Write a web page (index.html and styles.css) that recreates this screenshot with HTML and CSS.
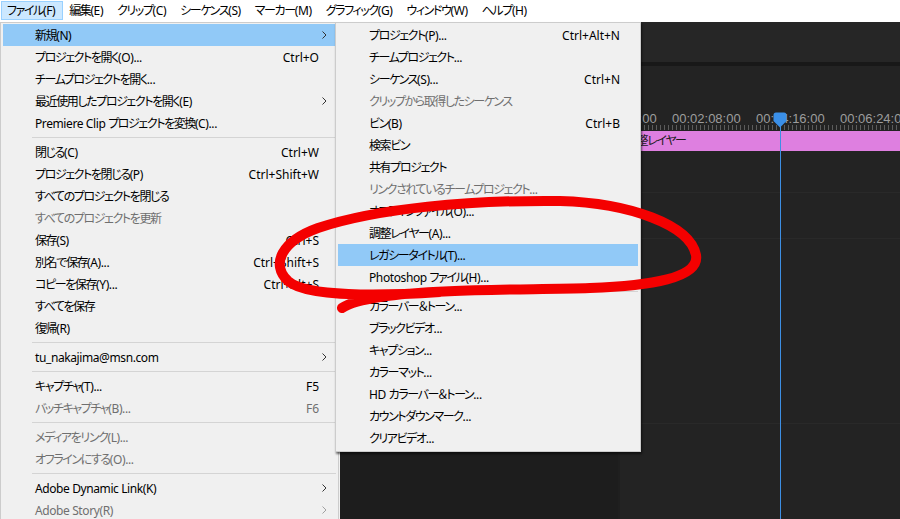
FILE: index.html
```html
<!DOCTYPE html>
<html lang="ja">
<head>
<meta charset="utf-8">
<title>Premiere Pro - ファイル メニュー</title>
<link rel="stylesheet" href="styles.css">
</head>
<body>
<div class="app">
  <div class="menubar">
    <span class="mb-item active"><span class="j">ファイル</span>(F)</span>
    <span class="mb-item"><span class="j">編集</span>(E)</span>
    <span class="mb-item"><span class="j">クリップ</span>(C)</span>
    <span class="mb-item"><span class="j">シーケンス</span>(S)</span>
    <span class="mb-item"><span class="j">マーカー</span>(M)</span>
    <span class="mb-item"><span class="j">グラフィック</span>(G)</span>
    <span class="mb-item"><span class="j">ウィンドウ</span>(W)</span>
    <span class="mb-item"><span class="j">ヘルプ</span>(H)</span>
  </div>
  <div class="workspace">
    <div class="left-col"></div>
    <div class="timeline">
      <div class="tl-header"></div>
      <div class="tl-divider"></div>
      <div class="tl-body">
        <div class="tl-side"></div>
        <div class="tl-tracks">
          <div class="tl-gap"></div>
          <div class="ruler-labels">
            <span class="tc first">00:00:00:00</span>
            <span class="tc">00:02:08:00</span>
            <span class="tc">00:04:16:00</span>
            <span class="tc">00:06:24:00</span>
          </div>
          <div class="ticks"></div>
          <div class="clip"><span class="j">調整レイヤー</span></div>
          <div class="track t1"></div>
          <div class="track t2"></div>
          <div class="track t3"></div>
          <div class="track t4"></div>
          <div class="playhead">
            <svg class="ph-head" width="14" height="16" viewBox="0 0 14 16"><path d="M3 0.5 H11 Q13.5 0.5 13.5 3 V9 L7 15.5 L0.5 9 V3 Q0.5 0.5 3 0.5 Z" fill="#3a8fe8"/></svg>
            <div class="ph-line"></div>
          </div>
        </div>
      </div>
    </div>
  </div>

  <div class="menu menu-main">
    <div class="mi hl"><span class="lb"><span class="j">新規</span>(N)</span><span class="arr"><svg width="5" height="8" viewBox="0 0 5 8"><polyline points="0.5,0.5 4,4 0.5,7.5" fill="none" stroke="#333" stroke-width="1"/></svg></span></div>
    <div class="mi"><span class="lb"><span class="j">プロジェクトを開く</span>(O)...</span><span class="sc">Ctrl+O</span><span class="arr"></span></div>
    <div class="mi"><span class="lb"><span class="j">チームプロジェクトを開く</span>...</span><span class="arr"></span></div>
    <div class="mi"><span class="lb"><span class="j">最近使用したプロジェクトを開く</span>(E)</span><span class="arr"><svg width="5" height="8" viewBox="0 0 5 8"><polyline points="0.5,0.5 4,4 0.5,7.5" fill="none" stroke="#333" stroke-width="1"/></svg></span></div>
    <div class="mi"><span class="lb">Premiere Clip <span class="j">プロジェクトを変換</span>(C)...</span><span class="arr"></span></div>
    <div class="sep"></div>
    <div class="mi"><span class="lb"><span class="j">閉じる</span>(C)</span><span class="sc">Ctrl+W</span><span class="arr"></span></div>
    <div class="mi"><span class="lb"><span class="j">プロジェクトを閉じる</span>(P)</span><span class="sc">Ctrl+Shift+W</span><span class="arr"></span></div>
    <div class="mi"><span class="lb"><span class="j">すべてのプロジェクトを閉じる</span></span><span class="arr"></span></div>
    <div class="mi dis"><span class="lb"><span class="j">すべてのプロジェクトを更新</span></span><span class="arr"></span></div>
    <div class="mi"><span class="lb"><span class="j">保存</span>(S)</span><span class="sc">Ctrl+S</span><span class="arr"></span></div>
    <div class="mi"><span class="lb"><span class="j">別名で保存</span>(A)...</span><span class="sc">Ctrl+Shift+S</span><span class="arr"></span></div>
    <div class="mi"><span class="lb"><span class="j">コピーを保存</span>(Y)...</span><span class="sc">Ctrl+Alt+S</span><span class="arr"></span></div>
    <div class="mi"><span class="lb"><span class="j">すべてを保存</span></span><span class="arr"></span></div>
    <div class="mi"><span class="lb"><span class="j">復帰</span>(R)</span><span class="arr"></span></div>
    <div class="sep"></div>
    <div class="mi"><span class="lb">tu_nakajima@msn.com</span><span class="arr"><svg width="5" height="8" viewBox="0 0 5 8"><polyline points="0.5,0.5 4,4 0.5,7.5" fill="none" stroke="#333" stroke-width="1"/></svg></span></div>
    <div class="sep"></div>
    <div class="mi"><span class="lb"><span class="j">キャプチャ</span>(T)...</span><span class="sc">F5</span><span class="arr"></span></div>
    <div class="mi dis"><span class="lb"><span class="j">バッチキャプチャ</span>(B)...</span><span class="sc">F6</span><span class="arr"></span></div>
    <div class="sep"></div>
    <div class="mi dis"><span class="lb"><span class="j">メディアをリンク</span>(L)...</span><span class="arr"></span></div>
    <div class="mi dis"><span class="lb"><span class="j">オフラインにする</span>(O)...</span><span class="arr"></span></div>
    <div class="sep"></div>
    <div class="mi"><span class="lb">Adobe Dynamic Link(K)</span><span class="arr"><svg width="5" height="8" viewBox="0 0 5 8"><polyline points="0.5,0.5 4,4 0.5,7.5" fill="none" stroke="#333" stroke-width="1"/></svg></span></div>
    <div class="mi dis"><span class="lb">Adobe Story(R)</span><span class="arr"><svg width="5" height="8" viewBox="0 0 5 8"><polyline points="0.5,0.5 4,4 0.5,7.5" fill="none" stroke="#a0a0a0" stroke-width="1"/></svg></span></div>
  </div>

  <div class="menu menu-sub">
    <div class="mi"><span class="lb"><span class="j">プロジェクト</span>(P)...</span><span class="sc">Ctrl+Alt+N</span><span class="arr"></span></div>
    <div class="mi"><span class="lb"><span class="j">チームプロジェクト</span>...</span><span class="arr"></span></div>
    <div class="mi"><span class="lb"><span class="j">シーケンス</span>(S)...</span><span class="sc">Ctrl+N</span><span class="arr"></span></div>
    <div class="mi dis"><span class="lb"><span class="j">クリップから取得したシーケンス</span></span><span class="arr"></span></div>
    <div class="mi"><span class="lb"><span class="j">ビン</span>(B)</span><span class="sc">Ctrl+B</span><span class="arr"></span></div>
    <div class="mi"><span class="lb"><span class="j">検索ビン</span></span><span class="arr"></span></div>
    <div class="mi"><span class="lb"><span class="j">共有プロジェクト</span></span><span class="arr"></span></div>
    <div class="mi dis"><span class="lb"><span class="j">リンクされているチームプロジェクト</span>...</span><span class="arr"></span></div>
    <div class="mi"><span class="lb"><span class="j">オフラインファイル</span>(O)...</span><span class="arr"></span></div>
    <div class="mi"><span class="lb"><span class="j">調整レイヤー</span>(A)...</span><span class="arr"></span></div>
    <div class="mi hl"><span class="lb"><span class="j">レガシータイトル</span>(T)...</span><span class="arr"></span></div>
    <div class="mi"><span class="lb">Photoshop <span class="j">ファイル</span>(H)...</span><span class="arr"></span></div>
    <div class="sep"></div>
    <div class="mi"><span class="lb"><span class="j">カラーバー＆トーン</span>...</span><span class="arr"></span></div>
    <div class="mi"><span class="lb"><span class="j">ブラックビデオ</span>...</span><span class="arr"></span></div>
    <div class="mi"><span class="lb"><span class="j">キャプション</span>...</span><span class="arr"></span></div>
    <div class="mi"><span class="lb"><span class="j">カラーマット</span>...</span><span class="arr"></span></div>
    <div class="mi"><span class="lb">HD <span class="j">カラーバー＆トーン</span>...</span><span class="arr"></span></div>
    <div class="mi"><span class="lb"><span class="j">カウントダウンマーク</span>...</span><span class="arr"></span></div>
    <div class="mi"><span class="lb"><span class="j">クリアビデオ</span>...</span><span class="arr"></span></div>
  </div>

  <svg class="annotation" width="900" height="519" viewBox="0 0 900 519">
    <path d="M440 292 C380 296 306 297 288 281 C270 264 282 241 318 228 C378 208 470 200 560 201 C630 203 690 225 696 255 C700 278 650 286 590 288 C520 290 430 289 380 297 C360 300 348 304 342 308" fill="none" stroke="#f40000" stroke-width="10" stroke-linecap="round" stroke-linejoin="round"/>
  </svg>
</div>
</body>
</html>
```

FILE: styles.css
```css
html, body {
  margin: 0;
  padding: 0;
}

body {
  width: 900px;
  height: 519px;
  overflow: hidden;
  background: #232323;
  font-family: "Noto Sans", "Noto Sans CJK JP", sans-serif;
  font-size: 12px;
  font-feature-settings: "palt";
  color: #000;
}

.app {
  position: relative;
  width: 900px;
  height: 519px;
  display: flex;
  flex-direction: column;
}

.j {
  letter-spacing: -1.4px;
}

/* ---------- menu bar ---------- */
.menubar {
  height: 22px;
  flex: 0 0 22px;
  background: #fff;
  display: flex;
  align-items: flex-start;
  padding-left: 1px;
  box-sizing: border-box;
}

.mb-item {
  height: 19px;
  line-height: 18px;
  margin-top: 1px;
  padding: 0 7px 0 5px;
  border: 1px solid transparent;
  box-sizing: border-box;
  white-space: nowrap;
  letter-spacing: -0.4px;
}

.mb-item.active {
  background: #cce8ff;
  border-color: #99d1ff;
}

/* ---------- workspace ---------- */
.workspace {
  flex: 1;
  display: flex;
  min-height: 0;
}

.left-col {
  flex: 0 0 340px;
  background: #f0f0f0;
}

.timeline {
  flex: 1;
  min-width: 0;
  display: flex;
  flex-direction: column;
  background: #232323;
}

.tl-header {
  height: 40px;
  background: #262626;
}

.tl-divider {
  height: 4px;
  background: #181818;
}

.tl-body {
  flex: 1;
  display: flex;
  min-width: 0;
}

.tl-side {
  flex: 0 0 278px;
  background: #1d1d1d;
  border-right: 2px solid #1f1f1f;
}

.tl-tracks {
  flex: 1;
  min-width: 0;
  position: relative;
  overflow: hidden;
  display: flex;
  flex-direction: column;
  background: #232323;
}

.tl-gap {
  height: 46px;
}

.ruler-labels {
  height: 13px;
  display: flex;
  white-space: nowrap;
  font-family: "Liberation Sans", sans-serif;
  font-size: 13px;
  line-height: 13px;
  color: #9d9d9d;
}

.tc {
  flex: 0 0 84px;
}

.tc.first {
  margin-left: -32px;
}

.ticks {
  height: 5px;
  margin-bottom: 1px;
  background: repeating-linear-gradient(to right, #5c5c5c 0 1px, transparent 1px 4px);
}

.clip {
  height: 20px;
  line-height: 20px;
  background: #de7fe0;
  color: #1b1b1b;
  padding-left: 6px;
  font-size: 12px;
  white-space: nowrap;
}

.track {
  border-bottom: 1px solid #292929;
}

.t1 { height: 41px; }
.t2 { height: 45px; }
.t3 { height: 184px; }
.t4 { flex: 1; border-bottom: 0; }

.playhead {
  position: absolute;
  left: 153px;
  top: 46px;
  bottom: 0;
  width: 14px;
}

.ph-head {
  display: block;
}

.ph-line {
  position: absolute;
  left: 7px;
  top: 14px;
  bottom: 0;
  width: 1px;
  background: #3d8fe4;
}

/* ---------- menus ---------- */
.menu {
  position: absolute;
  top: 22px;
  background: #f0f0f0;
  border: 1px solid #cccccc;
  box-sizing: border-box;
}

.menu-main {
  left: 0;
  width: 339px;
  height: 510px;
  padding: 1px 2px;
}

.menu-sub {
  left: 335px;
  width: 306px;
  padding: 1px 2px 2px 2px;
  box-shadow: 1px 2px 2px rgba(0, 0, 0, 0.55);
}

.mi {
  height: 22px;
  display: flex;
  align-items: center;
  padding-left: 32px;
  white-space: nowrap;
}

.lb {
  letter-spacing: -0.4px;
}

.menu-sub .mi {
  padding-left: 31px;
}

.mi.hl {
  background: #91c9f7;
}

.mi.dis {
  color: #6f6f6f;
}

.mi .sc {
  margin-left: auto;
}

.mi .lb + .arr {
  margin-left: auto;
}

.arr {
  flex: 0 0 17px;
  display: flex;
  align-items: center;
  padding-left: 3px;
  box-sizing: border-box;
}

.menu-sub .arr {
  flex-basis: 18px;
}

.arr svg {
  display: block;
}

.sep {
  height: 1px;
  background: #d4d4d4;
  margin: 3px 0 3px 29px;
}

/* ---------- hand-drawn annotation ---------- */
.annotation {
  position: absolute;
  left: 0;
  top: 0;
  pointer-events: none;
}
```
